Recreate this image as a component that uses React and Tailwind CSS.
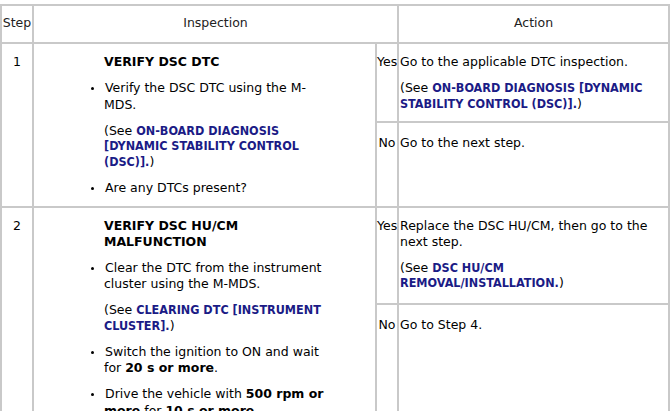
import React from 'react';

const Link = ({ children }) => (
  <span className="font-bold text-[#1b1b86]" style={{ fontFamily: '"DejaVu Sans Condensed", "DejaVu Sans", Verdana, sans-serif' }}>
    {children}
  </span>
);

const rows = [
  {
    step: '1',
    title: 'VERIFY DSC DTC',
    yesH: 'h-[79px]',
    noH: 'h-[85px]',
    yes: (
      <>
        <p>Go to the applicable DTC inspection.</p>
        <p className="mt-[10.5px]">
          (See <Link>ON-BOARD DIAGNOSIS [DYNAMIC STABILITY CONTROL (DSC)].</Link>)
        </p>
      </>
    ),
    no: <p>Go to the next step.</p>,
    items: [
      <>Verify the DSC DTC using the M-MDS.</>,
      <>
        (See <Link>ON-BOARD DIAGNOSIS [DYNAMIC STABILITY CONTROL (DSC)].</Link>)
      </>,
      <>Are any DTCs present?</>
    ],
    plain: [1]
  },
  {
    step: '2',
    title: 'VERIFY DSC HU/CM MALFUNCTION',
    yesH: 'h-[95px]',
    noH: 'h-[150px]',
    yes: (
      <>
        <p>Replace the DSC HU/CM, then go to the next step.</p>
        <p className="mt-[10.5px]">
          (See <Link>DSC HU/CM REMOVAL/INSTALLATION.</Link>)
        </p>
      </>
    ),
    no: <p>Go to Step 4.</p>,
    items: [
      <>Clear the DTC from the instrument cluster using the M-MDS.</>,
      <>
        (See <Link>CLEARING DTC [INSTRUMENT CLUSTER].</Link>)
      </>,
      <>
        Switch the ignition to ON and wait for <b>20 s or more</b>.
      </>,
      <>
        Drive the vehicle with <b>500 rpm or more</b> for <b>10 s or more</b>.
      </>,
      <>Are any DTCs present?</>
    ],
    plain: [1]
  }
];

const cell = 'border-2 border-[#c9c9c9]';

const App = () => {
  return (
    <div className="bg-white pt-[4px] text-[12.5px] leading-[15.5px] text-black" style={{ fontFamily: '"DejaVu Sans", Verdana, sans-serif' }}>
      <table className="table-fixed border-collapse w-[668px]">
        <colgroup>
          <col className="w-[32px]" />
          <col className="w-[343px]" />
          <col className="w-[22px]" />
          <col className="w-[271px]" />
        </colgroup>
        <thead>
          <tr className="h-[38px] text-[#222]">
            <th className={`${cell} align-middle font-normal px-0 pb-[3px]`}>Step</th>
            <th colSpan={2} className={`${cell} align-middle font-normal pb-[3px]`}>Inspection</th>
            <th className={`${cell} align-middle font-normal pb-[3px]`}>Action</th>
          </tr>
        </thead>
        <tbody>
          {rows.map((row) => (
            <React.Fragment key={row.step}>
              <tr>
                <td rowSpan={2} className={`${cell} align-top text-center pt-[10px]`}>{row.step}</td>
                <td rowSpan={2} className={`${cell} align-top pt-[10px] pb-[10px]`}>
                  <div className="pl-[70px] w-[302px]">
                    <p className="font-bold">{row.title}</p>
                    <ul className="list-disc mt-[10.5px] flex flex-col gap-[10.5px] marker:text-[10px]">
                      {row.items.map((item, i) =>
                        row.plain.includes(i) ? (
                          <li key={i} className="list-none">{item}</li>
                        ) : (
                          <li key={i} className="list-inside -indent-[13px]">{item}</li>
                        )
                      )}
                    </ul>
                  </div>
                </td>
                <td className={`${cell} ${row.yesH} align-top text-center pt-[10px] px-0`}>Yes</td>
                <td className={`${cell} align-top pt-[10px] pl-[1px]`}>{row.yes}</td>
              </tr>
              <tr>
                <td className={`${cell} ${row.noH} align-top text-center pt-[12px] px-0`}>No</td>
                <td className={`${cell} align-top pt-[12px] pl-[1px]`}>{row.no}</td>
              </tr>
            </React.Fragment>
          ))}
        </tbody>
      </table>
    </div>
  );
};

export default App;
